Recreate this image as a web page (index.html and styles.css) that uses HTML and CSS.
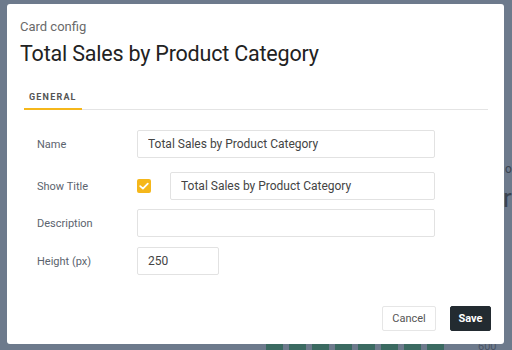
FILE: index.html
```html
<!DOCTYPE html>
<html>
<head>
<meta charset="utf-8">
<link rel="stylesheet" href="styles.css">
</head>
<body>
<div class="backdrop">
  <div class="bg-text bg-od">od</div>
  <div class="bg-text bg-big">r</div>
  <div class="bg-bars">
    <span></span><span></span><span></span><span></span><span></span><span></span><span></span><span></span>
  </div>
  <div class="bg-text bg-600">600</div>
</div>
<div class="modal">
  <div class="subtitle">Card config</div>
  <h1 class="title">Total Sales by Product Category</h1>
  <div class="tabs">
    <div class="tab active">GENERAL</div>
  </div>
  <form class="form">
    <div class="row row-name">
      <label class="label">Name</label>
      <input class="input wide" type="text" value="Total Sales by Product Category">
    </div>
    <div class="row row-show">
      <label class="label">Show Title</label>
      <span class="check"><svg viewBox="0 0 14 14" width="14" height="14"><path d="M3.2 7.2 L5.9 9.6 L10.8 4.6" fill="none" stroke="#fff" stroke-width="1.8" stroke-linecap="round" stroke-linejoin="round"/></svg></span>
      <input class="input title-input" type="text" value="Total Sales by Product Category">
    </div>
    <div class="row row-desc">
      <label class="label">Description</label>
      <input class="input wide" type="text" value="">
    </div>
    <div class="row row-height">
      <label class="label">Height (px)</label>
      <input class="input short" type="text" value="250">
    </div>
  </form>
  <div class="actions">
    <button class="btn cancel" type="button">Cancel</button>
    <button class="btn save" type="button">Save</button>
  </div>
</div>
</body>
</html>
```
FILE: styles.css
```css
* { box-sizing: border-box; }
html, body { margin: 0; padding: 0; }
body {
  width: 512px;
  height: 350px;
  overflow: hidden;
  background: #6d7a8c;
  font-family: "Roboto", "Noto Sans", sans-serif;
  position: relative;
}
.backdrop { position: absolute; inset: 0; }
.bg-text { position: absolute; color: #3a4350; font-size: 12px; }
.bg-od { left: 505px; top: 162px; }
.bg-big { left: 503px; top: 183px; font-size: 26px; }
.bg-600 { left: 478px; top: 340px; font-size: 11px; color: #4a5464; }
.bg-bars { position: absolute; left: 266px; top: 344px; display: flex; gap: 6px; }
.bg-bars span { width: 17px; height: 10px; background: #3b6a61; display: block; }

.modal {
  position: absolute;
  left: 7px;
  top: 4px;
  width: 497px;
  height: 340px;
  background: #fff;
  border-radius: 3px;
  padding: 15px 13px 0 13px;
  display: flex;
  flex-direction: column;
}
.subtitle {
  font-size: 13px;
  color: #6a6a6a;
  line-height: 16px;
}
.title {
  margin: 6px 0 0;
  font-size: 21.5px;
  font-weight: 400;
  color: #222;
  line-height: 26px;
  letter-spacing: -0.2px;
}
.tabs {
  margin: 21px 3px 0 4px;
  border-bottom: 1px solid #e4e4e4;
  display: flex;
}
.tab {
  font-size: 9px;
  font-weight: 700;
  letter-spacing: 1.2px;
  color: #555;
  padding: 4px 5px 6px;
}
.tab.active { border-bottom: 2px solid #f5b71b; margin-bottom: -1px; }
.form {
  margin: 20px 0 0 17px;
  display: flex;
  flex-direction: column;
}
.row {
  display: flex;
  align-items: center;
  height: 28px;
}
.row-show { margin-top: 14px; }
.row-desc { margin-top: 9px; }
.row-height { margin-top: 10px; }
.label {
  width: 100px;
  font-size: 11px;
  color: #5b636e;
}
.input {
  height: 28px;
  border: 1px solid #e2e2e2;
  border-radius: 2px;
  padding: 0 10px;
  font-family: inherit;
  font-size: 12px;
  color: #444;
  outline: none;
}
.wide { width: 298px; }
.title-input { width: 265px; }
.short { width: 82px; }
.check {
  width: 14px;
  height: 14px;
  background: #f5b71b;
  border-radius: 2px;
  margin-right: 19px;
  display: flex;
  flex: none;
}
.actions {
  margin-top: auto;
  margin-bottom: 13px;
  display: flex;
  justify-content: flex-end;
  gap: 14px;
}
.btn {
  font-family: inherit;
  font-size: 11px;
  height: 25px;
  border-radius: 2px;
  cursor: pointer;
}
.cancel {
  width: 54px;
  background: #fff;
  border: 1px solid #e6e6e6;
  color: #555;
}
.save {
  width: 41px;
  background: #232b31;
  border: 1px solid #232b31;
  color: #fff;
  font-weight: 700;
}
```
